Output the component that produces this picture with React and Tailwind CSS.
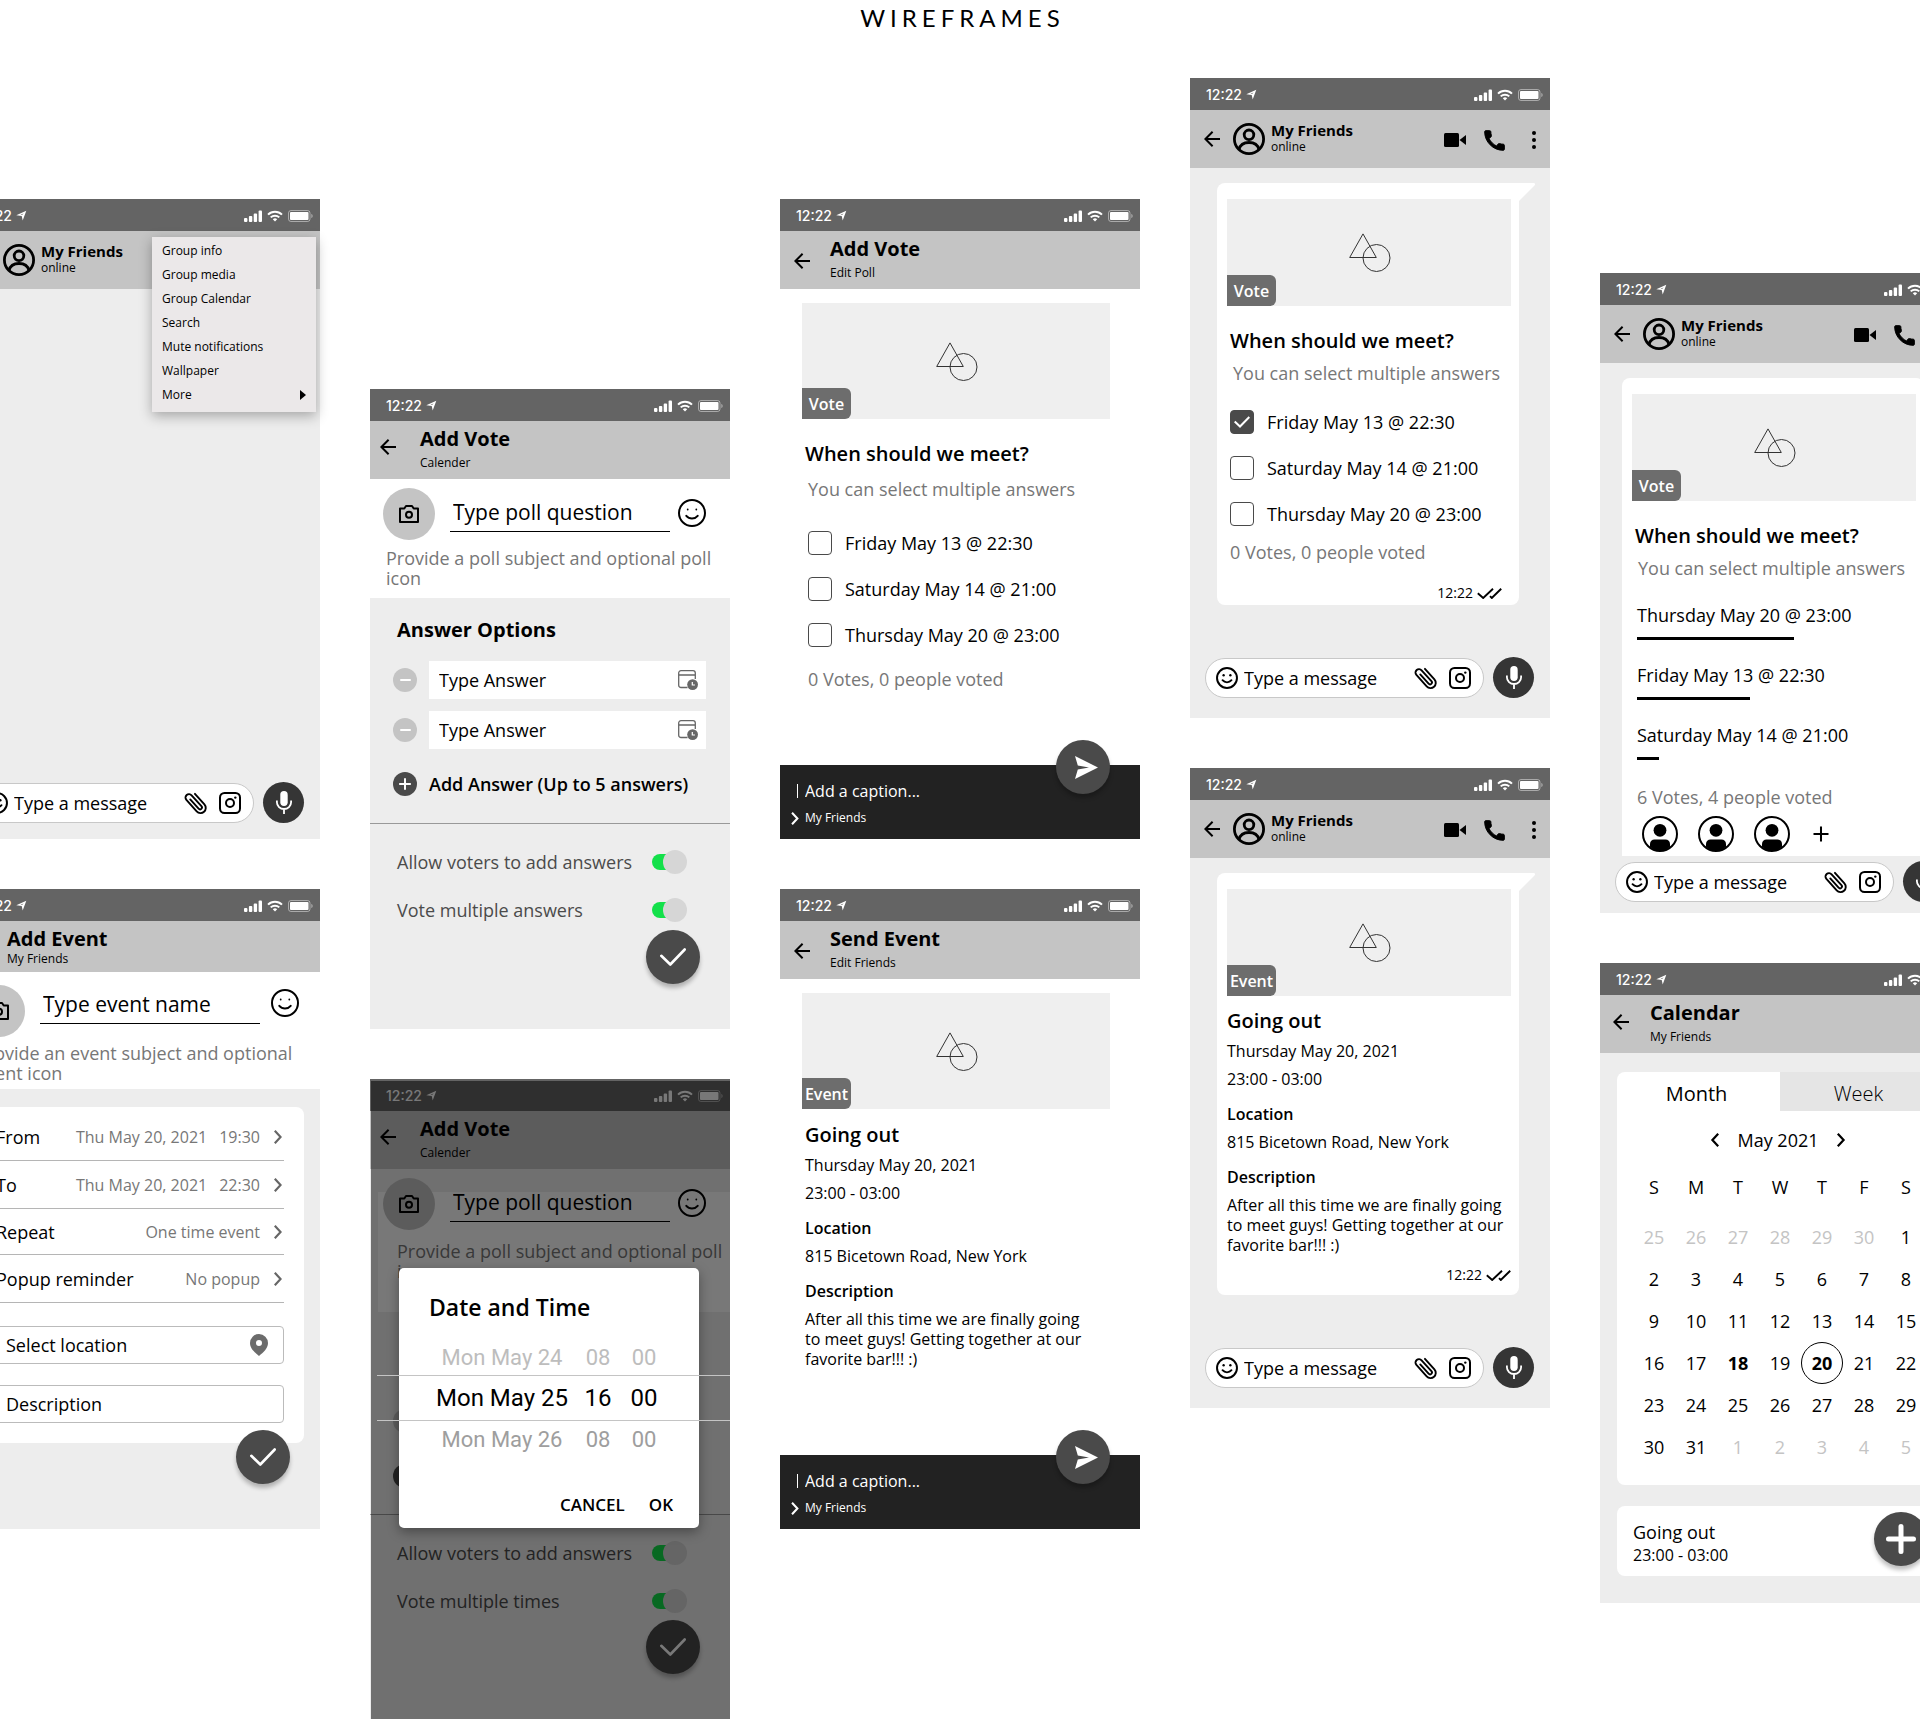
import React from "react";

/* ---------- icons ---------- */

const Svg = ({ w, h, box, children, className }) => (
  <svg
    width={w}
    height={h}
    viewBox={box || `0 0 ${w} ${h}`}
    fill="none"
    stroke="currentColor"
    aria-hidden="true"
    className={className || "shrink-0"}
  >
    {children}
  </svg>
);

const LocationArrow = () => (
  <Svg w={11} h={11}>
    <path d="M0.300 5.300 10.300 0.800 6.700 10.600 5.700 5.900Z" fill="currentColor" stroke="none" />
    <path d="M4.600 4.700 7.600 3.400 6 5Z" fill="#646464" stroke="none" />
  </Svg>
);

const Signal = () => (
  <Svg w={18} h={12}>
    <g fill="currentColor" stroke="none">
      <rect x="0" y="8" width="3.400" height="4" rx="1" />
      <rect x="4.900" y="6" width="3.400" height="6" rx="1" />
      <rect x="9.700" y="3.500" width="3.400" height="8.500" rx="1" />
      <rect x="14.600" y="0.500" width="3.400" height="11.500" rx="1" />
    </g>
  </Svg>
);

const Wifi = () => (
  <Svg w={16} h={12}>
    <path d="M1 4.600a10 10 0 0 1 14 0" strokeWidth="2" />
    <path d="M3.700 7.400a6.200 6.200 0 0 1 8.600 0" strokeWidth="2" />
    <path d="M8 11.600 5.800 9.300a3.200 3.200 0 0 1 4.400 0Z" fill="currentColor" stroke="none" />
  </Svg>
);

const Battery = () => (
  <Svg w={25} h={12}>
    <rect x="0.500" y="0.500" width="21.500" height="11" rx="2.500" strokeOpacity="0.450" />
    <rect x="2" y="2" width="18.500" height="8" rx="1" fill="currentColor" stroke="none" />
    <path d="M23.400 4v4c.8-.3 1.200-1 1.200-2s-.4-1.700-1.200-2Z" fill="currentColor" fillOpacity="0.500" stroke="none" />
  </Svg>
);

const Back = () => (
  <Svg w={16} h={16}>
    <path d="M16 8H1.500M8.600.8 1.400 8l7.200 7.200" strokeWidth="2" />
  </Svg>
);

const UserRing = () => (
  <Svg w={32} h={32}>
    <circle cx="16" cy="16" r="14.600" strokeWidth="2.800" />
    <circle cx="16" cy="11.800" r="4.800" strokeWidth="2.800" />
    <path d="M6 26.500c1.200-4.800 5-7 10-7s8.800 2.200 10 7" strokeWidth="2.800" />
  </Svg>
);

const UserSolid = () => (
  <Svg w={36} h={36}>
    <circle cx="18" cy="18" r="17" strokeWidth="2" />
    <circle cx="18" cy="14.300" r="6.400" fill="currentColor" stroke="none" />
    <path d="M8 30.800V28c0-3 2-4.500 4.500-4.500h11c2.500 0 4.500 1.500 4.500 4.500v2.800C25 34 22 35 18 35s-7-1-10-4.200Z" fill="currentColor" stroke="none" />
  </Svg>
);

const Video = () => (
  <Svg w={22} h={14}>
    <rect x="0" y="0" width="15" height="14" rx="1.500" fill="currentColor" stroke="none" />
    <path d="M15.500 7 22 2v10Z" fill="currentColor" stroke="none" />
  </Svg>
);

const Call = () => (
  <Svg w={21} h={21} box="2.400 2.400 19.200 19.200">
    <path
      d="M20.010 15.380c-1.230 0-2.420-.2-3.530-.56a.977.977 0 0 0-1.010.24l-1.570 1.970c-2.830-1.350-5.480-3.900-6.890-6.830l1.950-1.660c.27-.28.35-.67.24-1.020-.37-1.110-.56-2.300-.56-3.530 0-.54-.45-.99-.99-.99H4.190C3.650 3 3 3.240 3 3.990 3 13.280 10.730 21 20.010 21c.71 0 .99-.63.99-1.180v-3.450c0-.54-.45-.99-.99-.99z"
      fill="currentColor"
      strokeWidth="0.900"
    />
  </Svg>
);

const Dots = () => (
  <Svg w={4} h={18}>
    <g fill="currentColor" stroke="none">
      <circle cx="2" cy="2" r="2" />
      <circle cx="2" cy="9" r="2" />
      <circle cx="2" cy="16" r="2" />
    </g>
  </Svg>
);

const Smile = ({ size, bold }) => (
  <Svg w={size} h={size} box="0 0 28 28">
    <circle cx="14" cy="14" r={bold ? 12.7 : 13} strokeWidth={bold ? 2.5 : 2} />
    <circle cx="9.700" cy="10.500" r={bold ? 1.5 : 0.9} fill="currentColor" stroke="none" />
    <circle cx="18.300" cy="10.500" r={bold ? 1.5 : 0.9} fill="currentColor" stroke="none" />
    <path d="M8.300 16.800c3 3.600 8.400 3.600 11.400 0" strokeWidth={bold ? 2.4 : 2} strokeLinecap="round" />
  </Svg>
);

const Clip = () => (
  <Svg w={22} h={22} className="shrink-0 overflow-visible">
    <g transform="rotate(-42 11 11)" strokeWidth="1.900" strokeLinecap="round">
      <path d="M16.300 3.500v14.200a5.200 5.200 0 0 1-10.400 0V2.300a3.500 3.500 0 0 1 7 0v14.700a1.900 1.900 0 0 1-3.800 0V4.500" />
    </g>
  </Svg>
);

const Insta = () => (
  <Svg w={22} h={22}>
    <rect x="1" y="1" width="20" height="20" rx="4.500" strokeWidth="2" />
    <circle cx="11" cy="11" r="4" strokeWidth="2" />
    <circle cx="16.300" cy="5.600" r="1.200" fill="currentColor" stroke="none" />
  </Svg>
);

const Mic = () => (
  <Svg w={16} h={23}>
    <rect x="4.300" y="0" width="7.400" height="15" rx="3.700" fill="currentColor" stroke="none" />
    <path d="M.9 9.500v1.800a7.100 6.700 0 0 0 14.200 0V9.500M8 18v5" strokeWidth="1.800" />
  </Svg>
);

const Camera = () => (
  <Svg w={20} h={18}>
    <path d="M1 3.500h4.300L7 1h6l1.700 2.500H19V17H1Z" strokeWidth="2" strokeLinejoin="round" />
    <circle cx="10" cy="9.700" r="3" strokeWidth="2" />
  </Svg>
);

const CalendarClock = () => (
  <Svg w={20} h={20}>
    <path d="M9.500 17.500H3a2.300 2.300 0 0 1-2.300-2.300V3A2.300 2.300 0 0 1 3 .7h12A2.300 2.300 0 0 1 17.300 3v6M.7 5h16.600" strokeWidth="1.300" />
    <circle cx="14.600" cy="14.600" r="5.400" fill="currentColor" stroke="none" />
    <path d="M14.300 12v3h2.600" stroke="#fff" strokeWidth="1.200" />
  </Svg>
);

const Check = ({ className }) => (
  <Svg w={26} h={18} className={className}>
    <path d="M1.300 7.800 10.300 16.500 24.700 1.500" strokeWidth="2.600" strokeLinecap="round" strokeLinejoin="round" />
  </Svg>
);

const Ticks = () => (
  <Svg w={25} h={11}>
    <path d="M.8 5.300 6.200 10 16 .8M13 8.200 14.800 10 24.200.8" strokeWidth="1.900" />
  </Svg>
);

const Send = () => (
  <Svg w={23} h={23}>
    <path d="M0 0 23 11.500 0 23l2.800-9.500L14 11.500 2.800 9.500Z" fill="currentColor" stroke="none" />
  </Svg>
);

const Pin = () => (
  <Svg w={18} h={22}>
    <path
      d="M9 0a9 9 0 0 0-9 9c0 5.500 4.600 9.200 9 13 4.400-3.800 9-7.500 9-13a9 9 0 0 0-9-9Zm0 6a3 3 0 1 1 0 6 3 3 0 0 1 0-6Z"
      fill="currentColor"
      fillRule="evenodd"
      stroke="none"
    />
  </Svg>
);

const Chevron = ({ w = 8, h = 14, left }) => (
  <Svg w={w} h={h} box="0 0 8 14">
    <path d={left ? "M7.200.8 1.400 7l5.800 6.200" : "M.8.8 6.600 7 .8 13.200"} strokeWidth="2.200" />
  </Svg>
);

const Plus = ({ size, stroke, round }) => (
  <Svg w={size} h={size} box="0 0 24 24">
    <path d="M12 2v20M2 12h20" strokeWidth={stroke} strokeLinecap={round ? "round" : "butt"} />
  </Svg>
);

const Shapes = () => (
  <Svg w={42} h={39}>
    <path d="M14 .9 27.300 24.500H.7Z" />
    <circle cx="27.500" cy="25" r="13.500" />
  </Svg>
);

/* ---------- shared parts ---------- */

const StatusBar = () => (
  <div className="flex h-8 items-center bg-[#646464] pt-px pl-4 pr-[7px] text-white">
    <span className="font-['Inter'] text-sm font-medium">12:22</span>
    <span className="ml-1">
      <LocationArrow />
    </span>
    <span className="ml-auto flex items-center gap-[5px]">
      <Signal />
      <Wifi />
      <Battery />
    </span>
  </div>
);

const Phone = ({ label, className = "bg-[#ededed]", children }) => (
  <section aria-label={label} className={`relative flex min-h-[640px] w-[360px] flex-col ${className}`}>
    <StatusBar />
    {children}
  </section>
);

const iconButton = "flex shrink-0 items-center justify-center";

const ChatHeader = () => (
  <header className="flex h-[58px] items-center bg-[#c4c4c4] pl-3.5 pr-3.5">
    <button type="button" aria-label="Back" className={iconButton}>
      <Back />
    </button>
    <span className="ml-[13px]">
      <UserRing />
    </span>
    <div className="ml-1.5">
      <h2 className="text-[15px]/4 font-bold">My Friends</h2>
      <p className="text-xs/[18px]">online</p>
    </div>
    <div className="ml-auto flex items-center pt-0.5">
      <button type="button" aria-label="Video call" className={iconButton}>
        <Video />
      </button>
      <button type="button" aria-label="Call" className={`${iconButton} ml-[18px]`}>
        <Call />
      </button>
      <button type="button" aria-label="Menu" className={`${iconButton} ml-[27px]`}>
        <Dots />
      </button>
    </div>
  </header>
);

const TitleHeader = ({ title, subtitle, compact, arrow = "pl-3.5 [&>button]:pt-0.5" }) => (
  <header className={`flex bg-[#c4c4c4] ${arrow} ${compact ? "h-[51px]" : "h-[58px]"}`}>
    <button type="button" aria-label="Back" className={`${iconButton} w-9 justify-start`}>
      <Back />
    </button>
    <div className="pt-1.5">
      <h2 className="text-xl/6 font-bold">{title}</h2>
      <p className={`text-xs/4 ${compact ? "" : "mt-1"}`}>{subtitle}</p>
    </div>
  </header>
);

const Compose = ({ className = "pb-5" }) => (
  <div className={`mt-auto flex items-center gap-[9px] pl-[15px] pr-4 ${className}`}>
    <label className="flex h-10 min-w-0 flex-1 items-center rounded-full border border-[#c8c8c8] bg-white pl-2.5 pr-3">
      <Smile size={22} bold />
      <input
        type="text"
        aria-label="Message"
        placeholder="Type a message"
        className="ml-1.5 min-w-0 flex-1 bg-transparent text-lg outline-none placeholder:text-black"
      />
      <span className="flex items-center gap-3">
        <Clip />
        <Insta />
      </span>
    </label>
    <button
      type="button"
      aria-label="Record voice"
      className={`${iconButton} size-[41px] rounded-full bg-[#353535] text-white`}
    >
      <Mic />
    </button>
  </div>
);

const Fab = ({ label, children, className = "right-[30px] bottom-[45px]" }) => (
  <button
    type="button"
    aria-label={label}
    className={`absolute flex size-[54px] items-center justify-center rounded-full bg-[#4a4a4a] text-white shadow-[0_4px_4px_rgba(0,0,0,0.25)] ${className}`}
  >
    {children}
  </button>
);

const Picture = ({ tag, className }) => (
  <div className={`relative flex items-center justify-center bg-[#efefef] text-[#333] ${className}`}>
    <span className="pl-0.5">
      <Shapes />
    </span>
    <span className="absolute bottom-0 left-0 flex h-[31px] w-[49px] items-center justify-center rounded-r-md bg-[#6d6d6d] text-base font-semibold text-white">
      {tag}
    </span>
  </div>
);

const Question = () => <h3 className="text-xl/7 font-semibold">When should we meet?</h3>;

const PollOptions = ({ id, checked }) => (
  <ul className="flex flex-col gap-[22px]">
    {["Friday May 13 @ 22:30", "Saturday May 14 @ 21:00", "Thursday May 20 @ 23:00"].map((text, i) => (
      <li key={text}>
        <label htmlFor={`${id}-${i}`} className="flex h-6 items-center gap-[13px]">
          <span className="relative flex size-6 shrink-0">
            <input
              id={`${id}-${i}`}
              type="checkbox"
              defaultChecked={checked === i}
              className="peer size-6 appearance-none rounded-[4px] border border-[#4a4a4a] bg-white checked:bg-[#4a4a4a]"
            />
            <svg
              width="16"
              height="12"
              viewBox="0 0 16 12"
              fill="none"
              stroke="#fff"
              strokeWidth="2"
              aria-hidden="true"
              className="absolute top-1.5 left-1 hidden peer-checked:block"
            >
              <path d="M.7 5.500 6 10.500 15.300 1" />
            </svg>
          </span>
          <span className="text-lg/6">{text}</span>
        </label>
      </li>
    ))}
  </ul>
);

const EventDetails = () => (
  <div className="text-base/5">
    <h3 className="text-xl/7 font-semibold">Going out</h3>
    <p className="mt-1.5">Thursday May 20, 2021</p>
    <p className="mt-2">23:00 - 03:00</p>
    <h4 className="mt-[15px] font-semibold">Location</h4>
    <p className="mt-2">815 Bicetown Road, New York</p>
    <h4 className="mt-[15px] font-semibold">Description</h4>
    <p className="mt-2">
      After all this time we are finally going
      <br />
      to meet guys! Getting together at our
      <br />
      favorite bar!!! :)
    </p>
  </div>
);

const Bubble = ({ children, tail = true, className }) => (
  <article className={`relative flex flex-col bg-white ${className}`}>
    {children}
    {tail && (
      <svg width="24" height="18" viewBox="0 0 24 18" aria-hidden="true" className="absolute top-0 -right-4">
        <path d="M0 0h22.500c1.500 0 2 1.500 1 2.600L8 18H0Z" fill="#fff" />
      </svg>
    )}
  </article>
);

const Sent = ({ className }) => (
  <p className={`flex items-center justify-end gap-1 text-sm/4 ${className}`}>
    12:22 <Ticks />
  </p>
);

const CaptionFooter = () => (
  <footer className="mt-auto flex h-[74px] flex-col bg-[#222] pt-3.5 text-white">
    <label className="flex h-6 items-center pl-[17px]">
      <span className="h-3.5 w-px bg-white" />
      <input
        type="text"
        aria-label="Caption"
        placeholder="Add a caption..."
        className="ml-[7px] w-52 bg-transparent text-base outline-none placeholder:text-white"
      />
    </label>
    <p className="mt-[7px] flex items-center gap-1.5 pl-[11px] text-xs/4">
      <Chevron w={8} h={13} />
      My Friends
    </p>
  </footer>
);

const CameraButton = () => (
  <button
    type="button"
    aria-label="Add picture"
    className={`${iconButton} size-[52px] rounded-full bg-[#c4c4c4]`}
  >
    <Camera />
  </button>
);

const NameRow = ({ placeholder, className }) => (
  <div className={`flex items-start pl-[13px] ${className}`}>
    <CameraButton />
    <input
      type="text"
      aria-label={placeholder}
      placeholder={placeholder}
      className="ml-[15px] h-11 w-[220px] border-b border-black bg-transparent px-[3px] pt-1 text-[21px] outline-none placeholder:text-black"
    />
    <button type="button" aria-label="Emoji" className={`${iconButton} mt-[11px] ml-2`}>
      <Smile size={28} />
    </button>
  </div>
);

const Toggle = ({ id, label }) => (
  <div className="flex h-6 items-center justify-between">
    <label htmlFor={id} className="text-lg/6 text-[#4b4b4b]">
      {label}
    </label>
    <span className="relative flex h-6 w-[35px] items-center">
      <input
        id={id}
        type="checkbox"
        role="switch"
        defaultChecked
        className="peer h-4 w-[30px] appearance-none rounded-full bg-[#999] checked:bg-[#13e04a]"
      />
      <span className="pointer-events-none absolute top-0 left-0 size-6 rounded-full bg-[#d6d6d6] peer-checked:left-[11px]" />
    </span>
  </div>
);

const Minus = () => (
  <button
    type="button"
    aria-label="Remove answer"
    className={`${iconButton} size-6 rounded-full bg-[#c4c4c4]`}
  >
    <span className="h-0.5 w-[11px] rounded-full bg-white" />
  </button>
);

const AddDot = () => (
  <span className={`${iconButton} size-6 rounded-full bg-[#4a4a4a] text-white`}>
    <Plus size={14} stroke={3.4} />
  </span>
);

/* ---------- screens ---------- */

const MenuScreen = () => (
  <Phone label="Group chat menu">
    <ChatHeader />
    <nav
      aria-label="Group menu"
      className="absolute top-[38px] right-1 flex w-[164px] flex-col bg-[#ebe8e9] pt-0.5 pb-[5px] text-xs shadow-[0_4px_12px_rgba(0,0,0,0.3)]"
    >
      {["Group info", "Group media", "Group Calendar", "Search", "Mute notifications", "Wallpaper", "More"].map((t) => (
        <button key={t} type="button" className="flex h-6 items-center justify-between px-2.5 text-left">
          {t}
          {t === "More" && (
            <Svg w={6} h={10}>
              <path d="M0 0v10l6-5Z" fill="currentColor" stroke="none" />
            </Svg>
          )}
        </button>
      ))}
    </nav>
    <Compose className="pb-4" />
  </Phone>
);

const eventRows = [
  { label: "From", value: ["Thu May 20, 2021", "19:30"], height: "h-[54px] pt-1.5" },
  { label: "To", value: ["Thu May 20, 2021", "22:30"], height: "h-12" },
  { label: "Repeat", value: ["One time event"], height: "h-[46px]" },
  { label: "Popup reminder", value: ["No popup"], height: "h-12" },
];

const AddEventScreen = () => (
  <Phone label="Add event">
    <TitleHeader title="Add Event" subtitle="My Friends" compact arrow="pl-[11px]" />
    <div className="h-[117px] bg-white pt-2">
      <NameRow
        placeholder="Type event name"
        className="[&>button:first-child]:mt-[5px] [&>button:last-child]:mt-[9px] [&>button:last-child]:ml-[11px]"
      />
      <p className="mt-1.5 pl-4 pr-6 text-lg/5 text-[#777]">Provide an event subject and optional event icon</p>
    </div>
    <div className="mx-4 mt-[18px] rounded-lg bg-white px-5 pb-5">
      <ul>
        {eventRows.map((row) => (
          <li key={row.label} className={`border-b border-[#b5b5b5] ${row.height}`}>
            <button type="button" className="flex h-full w-full items-center text-left">
              <span className="text-lg/6">{row.label}</span>
              <span className="ml-auto flex gap-3 text-base/6 text-[#777]">
                {row.value.map((v) => (
                  <span key={v}>{v}</span>
                ))}
              </span>
              <span className="ml-3.5 mr-0.5 text-[#666]">
                <Chevron />
              </span>
            </button>
          </li>
        ))}
      </ul>
      <label className="mt-[23px] flex h-[38px] items-center rounded border border-[#bbb] pl-[9px] pr-[15px]">
        <input
          type="text"
          aria-label="Location"
          placeholder="Select location"
          className="min-w-0 flex-1 bg-transparent text-lg outline-none placeholder:text-black"
        />
        <span className="text-[#6b6b6b]">
          <Pin />
        </span>
      </label>
      <input
        type="text"
        aria-label="Description"
        placeholder="Description"
        className="mt-[21px] h-[38px] w-full rounded border border-[#bbb] bg-transparent px-[9px] text-lg outline-none placeholder:text-black"
      />
    </div>
    <Fab label="Save event">
      <Check />
    </Fab>
  </Phone>
);

const AddVoteScreen = () => (
  <Phone label="Add vote">
    <TitleHeader title="Add Vote" subtitle="Calender" arrow="pl-2.5 [&>button]:w-10 [&>button]:pb-1.5" />
    <div className="h-[119px] bg-white pt-[9px]">
      <NameRow placeholder="Type poll question" />
      <p className="mt-2 pl-4 pr-4 text-lg/5 text-[#777]">
        Provide a poll subject and optional poll
        <br />
        icon
      </p>
    </div>
    <div className="flex flex-col pt-[18px] pr-6 pl-[23px]">
      <h3 className="pl-1 text-xl/7 font-bold">Answer Options</h3>
      <ul className="mt-[17px] flex flex-col gap-3">
        {[1, 2].map((n) => (
          <li key={n} className="flex items-center gap-3">
            <Minus />
            <label className="flex h-[38px] min-w-0 flex-1 items-center bg-white pl-2.5 pr-2 text-[#666]">
              <input
                type="text"
                aria-label={`Answer ${n}`}
                placeholder="Type Answer"
                className="min-w-0 flex-1 bg-transparent text-lg outline-none placeholder:text-black"
              />
              <CalendarClock />
            </label>
          </li>
        ))}
      </ul>
      <button type="button" className="mt-[23px] flex items-center gap-3 text-lg/6 font-semibold">
        <AddDot />
        Add Answer (Up to 5 answers)
      </button>
    </div>
    <div className="mt-[27px] flex flex-col gap-6 border-t border-[#999] pt-[26px] pr-[43px] pl-[27px]">
      <Toggle id="allow-add" label="Allow voters to add answers" />
      <Toggle id="allow-multi" label="Vote multiple answers" />
    </div>
    <Fab label="Save vote">
      <Check />
    </Fab>
  </Phone>
);

const wheel = [
  { cells: ["Mon May 24", "08", "00"], style: "text-[22px] text-[#bdbdbd]" },
  { cells: ["Mon May 25", "16", "00"], style: "text-2xl text-black" },
  { cells: ["Mon May 26", "08", "00"], style: "text-[22px] text-[#9e9e9e]" },
];

const DateDialogScreen = () => (
  <Phone label="Pick date and time">
    <TitleHeader title="Add Vote" subtitle="Calender" arrow="pl-2.5 [&>button]:w-10 [&>button]:pb-1.5" />
    <div className="pt-[9px]">
      <NameRow placeholder="Type poll question" className="relative z-10" />
      <div className="-mt-[38px] ml-2 h-[120px] bg-white pt-[49px] pl-[19px]">
        <p className="text-lg/5 text-[#777]">
          Provide a poll subject and optional poll
          <br />
          icon
        </p>
      </div>
    </div>
    <div className="mt-[97px] flex flex-col items-start gap-[31px] pl-[23px]">
      <Minus />
      <AddDot />
    </div>
    <div className="mt-[26px] flex flex-col gap-6 border-t border-[#999] pt-[26px] pr-[43px] pl-[27px]">
      <Toggle id="allow-add-2" label="Allow voters to add answers" />
      <Toggle id="allow-times" label="Vote multiple times" />
    </div>
    <Fab label="Save vote">
      <Check />
    </Fab>
    <div className="absolute top-0.5 right-0 bottom-0 left-px z-20 bg-black/53" />
    <div
      role="dialog"
      aria-label="Date and Time"
      className="absolute top-[189px] right-[31px] left-[29px] z-30 flex h-[260px] flex-col rounded-[5px] bg-white shadow-[0_4px_12px_rgba(0,0,0,0.35)]"
    >
      <h3 className="mt-[25px] pl-[30px] text-[23px]/7 font-semibold">Date and Time</h3>
      <div className="mt-[18px] font-['Roboto']">
        {wheel.map((row, i) => (
          <div
            key={row.cells[0]}
            className={`grid grid-cols-[146px_46px_46px] ${row.style} ${
              i === 1 ? "-mr-[31px] -ml-[22px] h-[46px] border-y border-[#c4c4c4] pl-[52px]" : "h-9 pl-[30px]"
            }`}
          >
            {row.cells.map((c, k) => (
              <span key={k} className="flex items-center justify-center">
                {c}
              </span>
            ))}
          </div>
        ))}
      </div>
      <div className="mt-auto mb-[11px] flex justify-end gap-6 pr-[26px] text-[17px]/6 font-semibold">
        <button type="button">CANCEL</button>
        <button type="button">OK</button>
      </div>
    </div>
  </Phone>
);

const PollPreviewScreen = () => (
  <Phone label="Poll preview" className="bg-white">
    <TitleHeader title="Add Vote" subtitle="Edit Poll" />
    <Picture tag="Vote" className="mt-3.5 ml-[22px] h-[116px] w-[308px]" />
    <div className="mt-[21px] pl-[25px]">
      <Question />
      <div className="pl-[3px]">
        <p className="mt-[9px] mb-[30px] text-lg/6 text-[#777]">You can select multiple answers</p>
        <PollOptions id="preview" />
        <p className="mt-5 text-lg/6 text-[#777]">0 Votes, 0 people voted</p>
      </div>
    </div>
    <CaptionFooter />
    <Fab label="Send">
      <span className="pl-[7px]">
        <Send />
      </span>
    </Fab>
  </Phone>
);

const EventPreviewScreen = () => (
  <Phone label="Event preview" className="bg-white">
    <TitleHeader title="Send Event" subtitle="Edit Friends" />
    <Picture tag="Event" className="mt-3.5 ml-[22px] h-[116px] w-[308px]" />
    <div className="mt-3 pl-[25px]">
      <EventDetails />
    </div>
    <CaptionFooter />
    <Fab label="Send">
      <span className="pl-[7px]">
        <Send />
      </span>
    </Fab>
  </Phone>
);

const ChatPollScreen = () => (
  <Phone label="Poll in chat">
    <ChatHeader />
    <Bubble className="mt-[15px] mr-[31px] ml-[27px] h-[422px] rounded-lg rounded-tr-none">
      <Picture tag="Vote" className="mx-2.5 mt-4 h-[107px] w-[284px]" />
      <div className="mt-[21px] px-[13px]">
        <Question />
        <p className="mt-1.5 mb-[25px] pl-[3px] text-lg/6 text-[#777]">You can select multiple answers</p>
        <PollOptions id="chat" checked={0} />
        <p className="mt-3.5 text-lg/6 text-[#777]">0 Votes, 0 people voted</p>
      </div>
      <Sent className="mt-auto pr-[17px] pb-1" />
    </Bubble>
    <Compose />
  </Phone>
);

const ChatEventScreen = () => (
  <Phone label="Event in chat">
    <ChatHeader />
    <Bubble className="mt-[15px] mr-[31px] ml-[27px] h-[422px] rounded-lg rounded-tr-none">
      <Picture tag="Event" className="mx-2.5 mt-4 h-[107px] w-[284px]" />
      <div className="mt-[11px] px-2.5">
        <EventDetails />
      </div>
      <Sent className="mt-auto pr-2 pb-3" />
    </Bubble>
    <Compose />
  </Phone>
);

const results = [
  { text: "Thursday May 20 @ 23:00", width: 157 },
  { text: "Friday May 13 @ 22:30", width: 113 },
  { text: "Saturday May 14 @ 21:00", width: 22 },
];

const PollResultScreen = () => (
  <Phone label="Poll results">
    <ChatHeader />
    <Bubble tail={false} className="mt-[15px] mr-9 ml-[22px] h-[478px] rounded-t-lg">
      <Picture tag="Vote" className="mx-2.5 mt-4 h-[107px] w-[284px]" />
      <div className="mt-[21px] px-[13px]">
        <Question />
        <p className="mt-1.5 pl-[3px] text-lg/6 text-[#777]">You can select multiple answers</p>
        <ul className="mt-[23px] ml-0.5 flex flex-col gap-[23px]">
          {results.map((r) => (
            <li key={r.text} className="text-lg/6">
              {r.text}
              <div className="mt-2.5 h-[3px] bg-black" style={{ width: r.width }} />
            </li>
          ))}
        </ul>
        <p className="mt-[25px] ml-0.5 text-lg/6 text-[#777]">6 Votes, 4 people voted</p>
        <div className="mt-[7px] ml-[7px] flex items-center gap-5">
          <UserSolid />
          <UserSolid />
          <UserSolid />
          <button type="button" aria-label="More voters" className={`${iconButton} ml-0.5`}>
            <Plus size={18} stroke={2.7} />
          </button>
        </div>
      </div>
    </Bubble>
    <Compose className="pb-[11px]" />
  </Phone>
);

const weeks = [
  [25, 26, 27, 28, 29, 30, 1],
  [2, 3, 4, 5, 6, 7, 8],
  [9, 10, 11, 12, 13, 14, 15],
  [16, 17, 18, 19, 20, 21, 22],
  [23, 24, 25, 26, 27, 28, 29],
  [30, 31, 1, 2, 3, 4, 5],
];

const dayStyle = (week, day) => {
  if ((week === 0 && day > 7) || (week === 5 && day < 7)) return "text-[#c4c4c4]";
  if (day === 20) return "rounded-full border border-black font-bold";
  if (day === 18) return "font-bold";
  return "";
};

const CalendarScreen = () => (
  <Phone label="Calendar">
    <TitleHeader title="Calendar" subtitle="My Friends" arrow="pl-[13px] [&>button]:w-[37px] [&>button]:pb-1" />
    <div className="mx-[17px] mt-[19px] h-[413px] overflow-hidden rounded-lg bg-white">
      <div role="tablist" className="grid h-[39px] grid-cols-2 text-xl">
        <button type="button" role="tab" aria-selected="true" className="pt-1 pr-1">
          Month
        </button>
        <button type="button" role="tab" aria-selected="false" className="bg-[#e5e5e5] pt-1 pr-1.5 font-light">
          Week
        </button>
      </div>
      <div className="mt-[17px] flex h-6 items-center justify-center gap-[17px] pr-1 text-lg">
        <button type="button" aria-label="Previous month">
          <Chevron w={10} left />
        </button>
        May 2021
        <button type="button" aria-label="Next month">
          <Chevron w={10} />
        </button>
      </div>
      <table className="mx-4 mt-[13px] w-[294px] table-fixed text-lg/6">
        <thead>
          <tr>
            {["S", "M", "T", "W", "T", "F", "S"].map((d, i) => (
              <th key={i} scope="col" className="h-[51px] p-0 text-center align-top font-normal leading-11">
                {d}
              </th>
            ))}
          </tr>
        </thead>
        <tbody>
          {weeks.map((week, w) => (
            <tr key={w}>
              {week.map((day) => (
                <td key={day} className="p-0">
                  <button type="button" className={`size-[42px] align-top ${dayStyle(w, day)}`}>
                    {day}
                  </button>
                </td>
              ))}
            </tr>
          ))}
        </tbody>
      </table>
    </div>
    <article className="mx-[17px] mt-[21px] h-[70px] rounded-lg bg-white px-4 pt-3.5">
      <h3 className="text-lg/6">Going out</h3>
      <p className="mt-px text-base/5">23:00 - 03:00</p>
    </article>
    <Fab label="Add event" className="right-8 bottom-[37px]">
      <Plus size={30} stroke={4} round />
    </Fab>
  </Phone>
);

export default function App() {
  return (
    <main className="overflow-hidden bg-white font-['Open_Sans',sans-serif] text-black">
      <h1 className="h-9 pl-[5px] text-center font-['Lato',sans-serif] text-2xl/9 tracking-[5px]">WIREFRAMES</h1>
      <div className="flex items-start justify-center gap-[50px] *:flex *:shrink-0 *:flex-col *:gap-[50px]">
        <div className="pt-[163px]">
          <MenuScreen />
          <AddEventScreen />
        </div>
        <div className="pt-[353px]">
          <AddVoteScreen />
          <DateDialogScreen />
        </div>
        <div className="pt-[163px]">
          <PollPreviewScreen />
          <EventPreviewScreen />
        </div>
        <div className="pt-[42px]">
          <ChatPollScreen />
          <ChatEventScreen />
        </div>
        <div className="pt-[237px]">
          <PollResultScreen />
          <CalendarScreen />
        </div>
      </div>
    </main>
  );
}
